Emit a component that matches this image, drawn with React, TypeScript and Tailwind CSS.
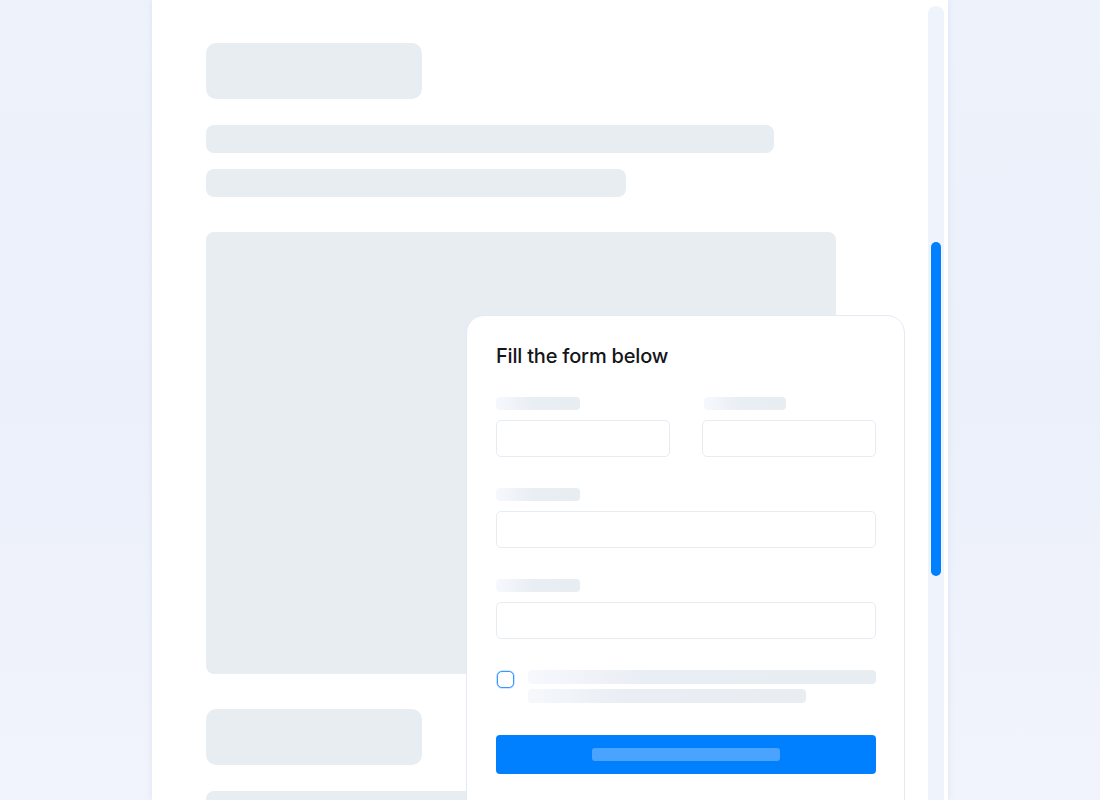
import React from "react";

function Bar({ className }: { className: string }) {
  return <div className={`bg-[#e8edf2] ${className}`} />;
}

function Label({ w }: { w: string }) {
  return (
    <div
      className={`h-[13px] ${w} rounded-[4px] bg-linear-to-r from-[#f6f8fc] via-[#e9eef4] via-45% to-[#e8edf2]`}
    />
  );
}

function Input() {
  return <div className="h-[37px] w-full rounded-[5px] border border-[#e7ecf3] bg-white" />;
}

function FormCard() {
  return (
    <div className="absolute left-[314px] top-[315px] w-[439px] h-[520px] rounded-[18px] border border-[#e4e9f2] bg-white pl-[29px] pr-[28px] pt-[28px]">
      <h2
        className="text-[20px] font-medium leading-6 text-[#14161a] tracking-[-0.2px]"
        style={{ fontFamily: "Inter, 'Noto Sans', sans-serif" }}
      >
        Fill the form below
      </h2>

      <div className="mt-[29px] grid grid-cols-2 gap-x-[32px]">
        <div className="flex flex-col gap-[10px]">
          <Label w="w-[84px]" />
          <Input />
        </div>
        <div className="flex flex-col gap-[10px]">
          <div className="pl-[2px]">
            <Label w="w-[82px]" />
          </div>
          <Input />
        </div>
      </div>

      <div className="mt-[31px] flex flex-col gap-[10px]">
        <Label w="w-[84px]" />
        <Input />
      </div>

      <div className="mt-[31px] flex flex-col gap-[10px]">
        <Label w="w-[84px]" />
        <Input />
      </div>

      <div className="mt-[31px] flex gap-[14px]">
        <div className="mt-[1px] ml-[1px] h-[17px] w-[17px] shrink-0 rounded-[5px] border border-[#3a96ff] bg-white shadow-[0_0_0_0.6px_#9fceff]" />
        <div className="flex flex-1 flex-col gap-[5px]">
          <div className="h-[14px] w-full rounded-[4px] bg-linear-to-r from-[#f6f8fc] via-[#e9eef4] via-35% to-[#e8edf2]" />
          <div className="h-[14px] w-[278px] rounded-[4px] bg-linear-to-r from-[#f6f8fc] via-[#e9eef4] via-35% to-[#e8edf2]" />
        </div>
      </div>

      <div className="mt-[32px] flex h-[39px] w-full items-center justify-center rounded-[4px] bg-[#0080ff]">
        <div className="h-[13px] w-[188px] rounded-[3px] bg-[#4aa3ff]" />
      </div>
    </div>
  );
}

export default function App() {
  return (
    <div className="h-[800px] w-[1100px] overflow-hidden bg-linear-to-b from-[#eef2fb] via-[#ecf0fa] to-[#f1f4fc]">
      <div className="relative ml-[152px] h-[800px] w-[796px] bg-white shadow-[0_0_6px_rgba(180,195,225,0.35)]">
        <div className="flex flex-col pl-[54px] pt-[43px]">
          <Bar className="h-[56px] w-[216px] rounded-[10px]" />
          <Bar className="mt-[26px] h-[28px] w-[568px] rounded-[8px]" />
          <Bar className="mt-[16px] h-[28px] w-[420px] rounded-[8px]" />
          <Bar className="mt-[35px] h-[442px] w-[630px] rounded-[8px]" />
          <Bar className="mt-[35px] h-[56px] w-[216px] rounded-[10px]" />
          <Bar className="mt-[26px] h-[28px] w-[568px] rounded-[8px]" />
        </div>

        <FormCard />

        {/* scrollbar */}
        <div className="absolute right-[4px] top-[6px] h-[820px] w-[16px] rounded-full bg-[#eef3fc]">
          <div className="absolute left-[3px] top-[236px] h-[334px] w-[10px] rounded-full bg-[#0080ff]" />
        </div>
      </div>
    </div>
  );
}
